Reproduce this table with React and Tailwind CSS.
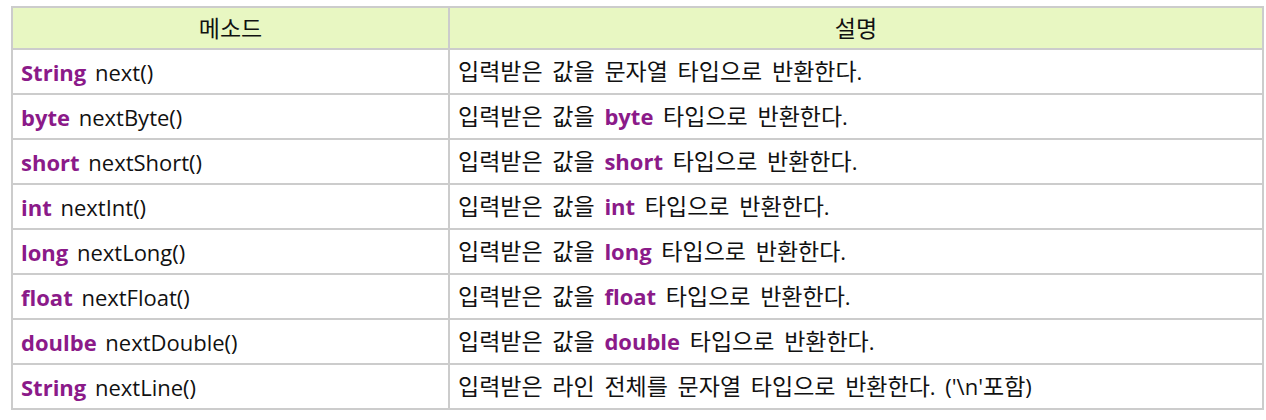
const rows = [
  { type: 'String', name: 'next()', plain: '문자열' },
  { type: 'byte', name: 'nextByte()', word: 'byte' },
  { type: 'short', name: 'nextShort()', word: 'short' },
  { type: 'int', name: 'nextInt()', word: 'int' },
  { type: 'long', name: 'nextLong()', word: 'long' },
  { type: 'float', name: 'nextFloat()', word: 'float' },
  { type: 'doulbe', name: 'nextDouble()', word: 'double' },
];

const kw = 'font-bold text-[#8b1a89]';
const cell = 'flex h-[43px] items-center bg-white px-[8px]';
const head = 'flex h-[40px] items-center justify-center bg-[#e8f7c2]';

// hangul runs get a slightly larger size so the line length matches
function Ko({ text }) {
  return text.split(/([\uAC00-\uD7A3]+)/).map((part, i) =>
    /[\uAC00-\uD7A3]/.test(part) ? (
      <span key={i} className="text-[23px]">
        {part}
      </span>
    ) : (
      part
    )
  );
}

export default function App() {
  return (
    <div className="min-h-screen bg-white pt-[6px] pl-[11px]">
      <div
        className="grid w-[1253px] grid-cols-[435px_812px] gap-[2px] bg-[#cccccc] p-[2px] text-[22px] leading-none text-[#111] [word-spacing:4px]"
        style={{ fontFamily: '"Open Sans", "Noto Sans CJK KR", sans-serif' }}
      >
        <div className={head}>
          <Ko text="메소드" />
        </div>
        <div className={head}>
          <Ko text="설명" />
        </div>
        {rows.map((r) => (
          <div key={r.name} className="contents">
            <div className={cell}>
              <span className="[word-spacing:3px]">
                <span className={kw}>{r.type}</span> {r.name}
              </span>
            </div>
            <div className={cell}>
              {r.word ? (
                <span>
                  <Ko text="입력받은 값을 " />
                  <span className={kw}>{r.word}</span>
                  <Ko text=" 타입으로 반환한다." />
                </span>
              ) : (
                <span>
                  <Ko text={`입력받은 값을 ${r.plain} 타입으로 반환한다.`} />
                </span>
              )}
            </div>
          </div>
        ))}
        <div className={cell}>
          <span className="[word-spacing:3px]">
            <span className={kw}>String</span> nextLine()
          </span>
        </div>
        <div className={cell}>
          <span>
            <Ko text="입력받은 라인 전체를 문자열 타입으로 반환한다. ('\n'포함)" />
          </span>
        </div>
      </div>
    </div>
  );
}
